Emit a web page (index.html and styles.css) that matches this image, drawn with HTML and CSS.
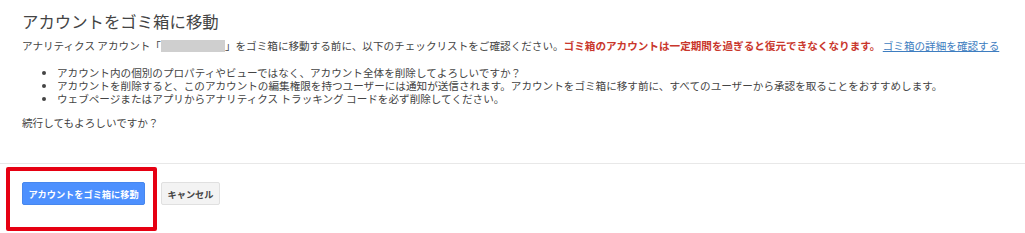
FILE: index.html
```html
<!DOCTYPE html>
<html lang="ja">
<head>
  <meta charset="UTF-8">
  <meta name="viewport" content="width=device-width, initial-scale=1.0">
  <title>アカウントをゴミ箱に移動</title>
  <link rel="stylesheet" href="styles.css">
</head>
<body>
  <div class="dialog">
    <h2 class="dialog-title">アカウントをゴミ箱に移動</h2>
    <p class="lead">アナリティクス アカウント「<span class="masked"></span>」をゴミ箱に移動する前に、以下のチェックリストをご確認ください。<strong class="warn">ゴミ箱のアカウントは一定期間を過ぎると復元できなくなります。</strong> <a class="more" href="#">ゴミ箱の詳細を確認する</a></p>
    <ul class="checklist">
      <li>アカウント内の個別のプロパティやビューではなく、アカウント全体を削除してよろしいですか？</li>
      <li>アカウントを削除すると、このアカウントの編集権限を持つユーザーには通知が送信されます。アカウントをゴミ箱に移す前に、すべてのユーザーから承認を取ることをおすすめします。</li>
      <li>ウェブページまたはアプリからアナリティクス トラッキング コードを必ず削除してください。</li>
    </ul>
    <p class="confirm">続行してもよろしいですか？</p>
  </div>

  <div class="dialog-footer">
    <button class="btn btn-primary">アカウントをゴミ箱に移動</button>
    <button class="btn btn-default">キャンセル</button>
    <!-- 注釈の赤枠 -->
    <div class="highlight"></div>
  </div>
</body>
</html>
```

FILE: styles.css
```css
html, body {
  margin: 0;
  background: #fff;
}
body {
  font-family: "Noto Sans CJK JP", "Noto Sans", sans-serif;
  color: #444;
}

.dialog {
  padding: 10px 0 0 22px;
}
.dialog-title {
  margin: 0;
  font-size: 16.4px;
  line-height: 22px;
  font-weight: normal;
  color: #444;
}
.lead {
  margin: 7px 0 0;
  font-size: 10.6px;
  line-height: 14px;
  white-space: nowrap;
}
.masked {
  display: inline-block;
  width: 64px;
  height: 12px;
  background: #cfcfcf;
  vertical-align: -2px;
}
.warn {
  color: #c9372c;
  font-weight: bold;
}
.more {
  color: #3e7dc0;
  text-decoration: underline;
}

.checklist {
  margin: 13px 0 0;
  padding-left: 35px;
  font-size: 10.6px;
  line-height: 13px;
}
.confirm {
  margin: 11px 0 0;
  font-size: 10.6px;
  line-height: 14px;
}

/* フッター */
.dialog-footer {
  position: relative;
  margin-top: 33px;
  border-top: 1px solid #e8e8e8;
  padding: 18px 0 28px 22px;
  display: flex;
  align-items: flex-start;
  gap: 16px;
}
.btn {
  height: 23px;
  padding: 0;
  border-radius: 2px;
  font-family: inherit;
  font-size: 9.2px;
  font-weight: bold;
  white-space: nowrap;
  cursor: pointer;
}
.btn-primary {
  width: 123px;
  background: #4d90fe;
  border: 1px solid #4787ed;
  color: #fff;
}
.btn-default {
  width: 59px;
  background: #f3f3f3;
  border: 1px solid #e0e0e0;
  color: #444;
}

.highlight {
  position: absolute;
  left: 6px;
  top: 3px;
  width: 143px;
  height: 56px;
  border: 4px solid #e60012;
  border-radius: 2px;
}
```
